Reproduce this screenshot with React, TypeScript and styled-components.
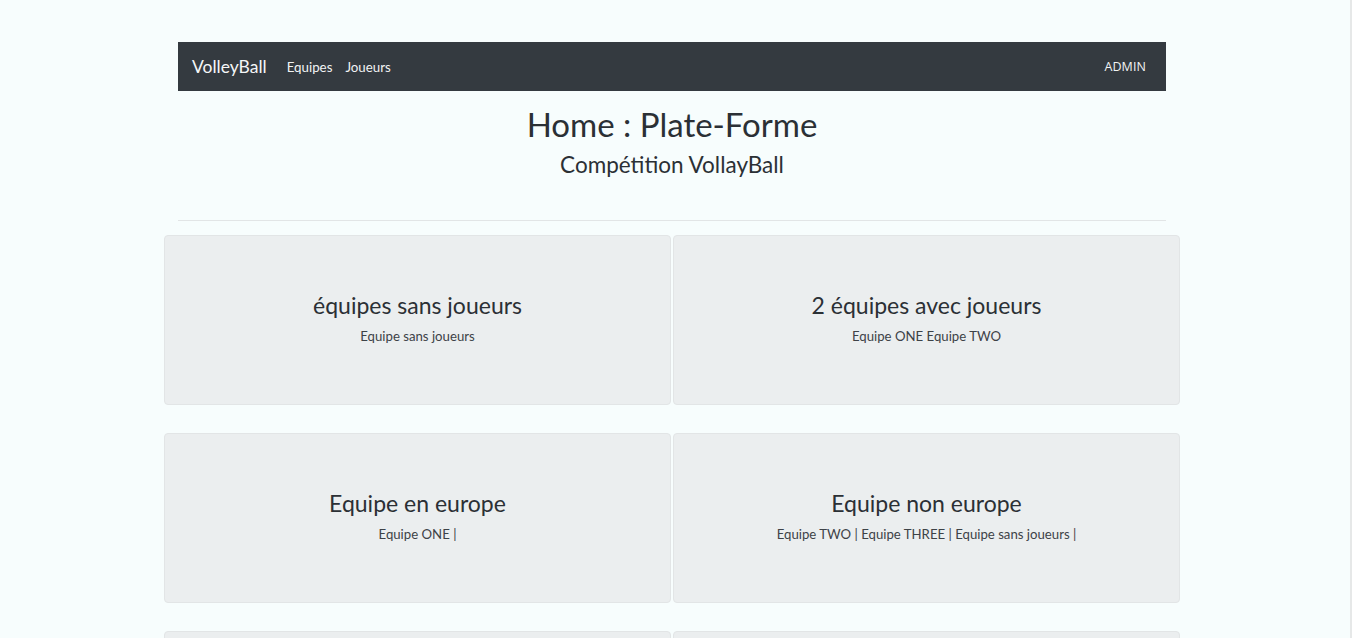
import styled, { createGlobalStyle } from "styled-components";

const GlobalStyle = createGlobalStyle`
  html, body {
    margin: 0;
    padding: 0;
    background-color: #f7fdfd;
    font-family: "Lato", "Noto Sans", sans-serif;
    color: #212529;
    overflow: hidden;
  }
`;

const Page = styled.div`
  display: flex;
  justify-content: center;
  padding: 42px 6px 0 0;
  min-height: 638px;
  box-sizing: border-box;
  border-right: 2px solid #e6e8e8;
`;

const Container = styled.div`
  width: 988px;
  display: flex;
  flex-direction: column;
`;

const NavBar = styled.nav`
  height: 49px;
  background-color: #343a40;
  display: flex;
  align-items: center;
  padding: 0 20px 0 14px;
`;

const Brand = styled.span`
  color: #f4f6f7;
  font-size: 17.5px;
  margin-right: 20px;
`;

const NavLink = styled.span`
  color: #f1f3f4;
  font-size: 13.3px;
  margin-right: 13px;
`;

const Spacer = styled.div`
  flex: 1;
`;

const AdminLink = styled.span`
  color: #f1f3f4;
  font-size: 12.5px;
  font-family: "Open Sans", "Noto Sans", sans-serif;
  letter-spacing: 0.1px;
`;

const Header = styled.header`
  text-align: center;
  padding-top: 14px;
  padding-bottom: 42px;
  border-bottom: 1px solid #e2e5e6;
`;

const Title = styled.h1`
  margin: 0;
  font-size: 33px;
  font-weight: 400;
  color: #2b3035;
  line-height: 38px;
`;

const Subtitle = styled.h2`
  margin: 9px 0 0;
  font-size: 22.5px;
  font-weight: 400;
  color: #2b3035;
  line-height: 26px;
`;

const Grid = styled.div`
  display: grid;
  grid-template-columns: 1fr 1fr;
  column-gap: 2px;
  row-gap: 28px;
  margin: 14px -14px 0;
`;

const Card = styled.div`
  height: 170px;
  background-color: #ebeeef;
  border: 1px solid #e2e5e6;
  border-radius: 4px;
  box-sizing: border-box;
  display: flex;
  flex-direction: column;
  align-items: center;
  justify-content: center;
  padding-bottom: 6px;
`;

const CardTitle = styled.h3`
  margin: 0;
  font-size: 23px;
  font-weight: 400;
  color: #2b3035;
  line-height: 28px;
`;

const CardText = styled.p`
  margin: 9px 0 0;
  font-size: 13.2px;
  color: #3d4247;
  line-height: 16px;
`;

const cards = [
  { title: "équipes sans joueurs", text: "Equipe sans joueurs" },
  { title: "2 équipes avec joueurs", text: "Equipe ONE Equipe TWO" },
  { title: "Equipe en europe", text: "Equipe ONE |" },
  { title: "Equipe non europe", text: "Equipe TWO | Equipe THREE | Equipe sans joueurs |" },
  { title: "", text: "" },
  { title: "", text: "" },
];

export default function App() {
  return (
    <>
      <GlobalStyle />
      <Page>
        <Container>
          <NavBar>
            <Brand>VolleyBall</Brand>
            <NavLink>Equipes</NavLink>
            <NavLink>Joueurs</NavLink>
            <Spacer />
            <AdminLink>ADMIN</AdminLink>
          </NavBar>
          <Header>
            <Title>Home : Plate-Forme</Title>
            <Subtitle>Compétition VollayBall</Subtitle>
          </Header>
          <Grid>
            {cards.map((c, i) => (
              <Card key={i}>
                {c.title && <CardTitle>{c.title}</CardTitle>}
                {c.text && <CardText>{c.text}</CardText>}
              </Card>
            ))}
          </Grid>
        </Container>
      </Page>
    </>
  );
}
